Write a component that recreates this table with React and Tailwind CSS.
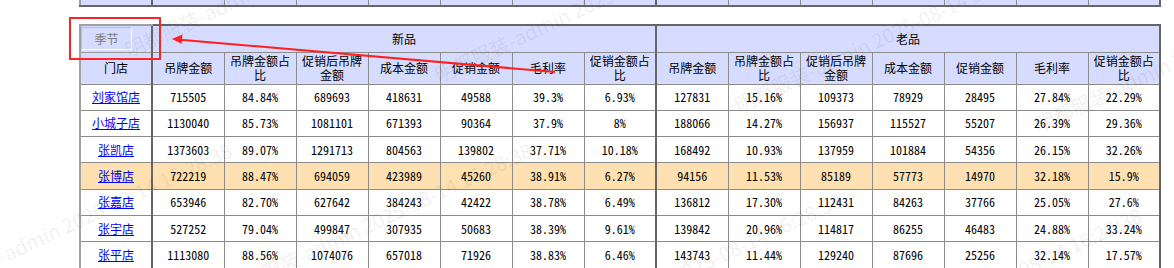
import React from "react";

// columns shared by both groups
const cols = ["吊牌金额", "吊牌金额占比", "促销后吊牌金额", "成本金额", "促销金额", "毛利率", "促销金额占比"];

const rows = [
  { store: "刘家馆店", n: ["715505", "84.84%", "689693", "418631", "49588", "39.3%", "6.93%"], o: ["127831", "15.16%", "109373", "78929", "28495", "27.84%", "22.29%"] },
  { store: "小城子店", n: ["1130040", "85.73%", "1081101", "671393", "90364", "37.9%", "8%"], o: ["188066", "14.27%", "156937", "115527", "55207", "26.39%", "29.36%"] },
  { store: "张凯店", n: ["1373603", "89.07%", "1291713", "804563", "139802", "37.71%", "10.18%"], o: ["168492", "10.93%", "137959", "101884", "54356", "26.15%", "32.26%"] },
  { store: "张博店", hl: true, n: ["722219", "88.47%", "694059", "423989", "45260", "38.91%", "6.27%"], o: ["94156", "11.53%", "85189", "57773", "14970", "32.18%", "15.9%"] },
  { store: "张嘉店", n: ["653946", "82.70%", "627642", "384243", "42422", "38.78%", "6.49%"], o: ["136812", "17.30%", "112431", "84263", "37766", "25.05%", "27.6%"] },
  { store: "张宇店", n: ["527252", "79.04%", "499847", "307935", "50683", "38.39%", "9.61%"], o: ["139842", "20.96%", "114817", "86255", "46483", "24.88%", "33.24%"] },
  { store: "张平店", n: ["1113080", "88.56%", "1074076", "657018", "71926", "38.83%", "6.46%"], o: ["143743", "11.44%", "129240", "87696", "25256", "32.14%", "17.57%"] },
];

// watermark anchors (bottom-left of each text run)
const marks = [
  [130, 60], [440, 85], [740, 115], [1040, 135],
  [-70, 300], [230, 300], [540, 350], [840, 365],
];

const cellBorder = "border border-[#8c8c8c]";
const groupStart = "border-l-2 border-l-[#666]";
const groupEnd = "border-r-2 border-r-[#666]";

function cellClass(i, extra = "") {
  let c = `${cellBorder} px-[2px] text-center align-middle ${extra}`;
  if (i === 0) c += ` ${groupStart}`;
  return c;
}

export default function App() {
  return (
    <div className="relative w-[1174px] h-[268px] overflow-hidden bg-white text-[12px] text-black font-['Noto_Sans_Mono_CJK_SC','Noto_Sans_CJK_SC',monospace]">
      {/* bottom edge of the previous table */}
      <table className="ml-[79px] w-[1082px] table-fixed border-collapse">
        <tbody>
          <tr className="h-[6px]">
            <td className="border-l-2 border-l-[#a0a0a0] border-b-2 border-b-[#666] bg-[#d6dcff]" />
            {[...cols, ...cols].map((c, i) => (
              <td
                key={i}
                className={`border-x border-x-[#8c8c8c] border-b-2 border-b-[#666] bg-[#d6dcff] ${i === 0 || i === 7 ? groupStart : ""} ${i === 13 ? groupEnd : ""}`}
              />
            ))}
          </tr>
        </tbody>
      </table>

      <table className="ml-[79px] mt-[17px] w-[1082px] table-fixed border-collapse leading-[14px]">
        <thead>
          <tr className="h-[27px] bg-[#d6dcff]">
            <th className="border border-[#9a9a9a] border-l-2 border-l-[#a0a0a0] border-t-2 border-t-[#a0a0a0] p-0 text-left align-middle font-normal">
              <div className="flex h-[23px] w-[51px] items-center justify-center border border-t-[#bdbdbd] border-l-[#bdbdbd] border-b-white border-r-white text-[#7a7a7a]">
                季节
              </div>
            </th>
            <th colSpan={7} className={`${cellBorder} ${groupStart} border-t-2 border-t-[#666] font-normal`}>新品</th>
            <th colSpan={7} className={`${cellBorder} ${groupStart} ${groupEnd} border-t-2 border-t-[#666] font-normal`}>老品</th>
          </tr>
          <tr className="h-[32px] bg-[#d6dcff]">
            <th className={`${cellBorder} border-l-2 border-l-[#a0a0a0] font-normal`}>门店</th>
            {cols.map((c, i) => (
              <th key={"n" + i} className={cellClass(i, "font-normal")}>{c}</th>
            ))}
            {cols.map((c, i) => (
              <th key={"o" + i} className={cellClass(i, `font-normal ${i === 6 ? groupEnd : ""}`)}>{c}</th>
            ))}
          </tr>
        </thead>
        <tbody>
          {rows.map((r) => (
            <tr key={r.store} className={`h-[26.3px] ${r.hl ? "bg-[#ffe0b0]" : "bg-white"}`}>
              <td className={`${cellBorder} border-l-2 border-l-[#a0a0a0] text-center`}>
                <a href="#" className="text-[#0000ff] underline">{r.store}</a>
              </td>
              {r.n.map((v, i) => (
                <td key={"n" + i} className={cellClass(i)}>{v}</td>
              ))}
              {r.o.map((v, i) => (
                <td key={"o" + i} className={cellClass(i, i === 6 ? groupEnd : "")}>{v}</td>
              ))}
            </tr>
          ))}
        </tbody>
      </table>

      {/* watermark */}
      <div className="pointer-events-none absolute inset-0">
        {marks.map(([x, y], i) => (
          <span
            key={i}
            className="absolute origin-bottom-left -rotate-[25deg] whitespace-nowrap text-[20px] leading-[20px] text-black/[0.07] font-['Noto_Sans_CJK_SC',sans-serif]"
            style={{ left: x, top: y - 20 }}
          >
            明都服装-admin 2025-08-14 16:28:38
          </span>
        ))}
      </div>

      {/* annotation */}
      <div className="pointer-events-none absolute left-[69px] top-[17px] h-[43px] w-[92px] border-2 border-[#ff2424]" />
      <svg className="pointer-events-none absolute left-0 top-0" width="1174" height="268">
        <line x1="180" y1="39.7" x2="555" y2="72" stroke="#ff1f1f" strokeWidth="2" />
        <polygon points="172,39 182.4,34.6 181.6,43.8" fill="#ff1f1f" />
      </svg>
    </div>
  );
}
